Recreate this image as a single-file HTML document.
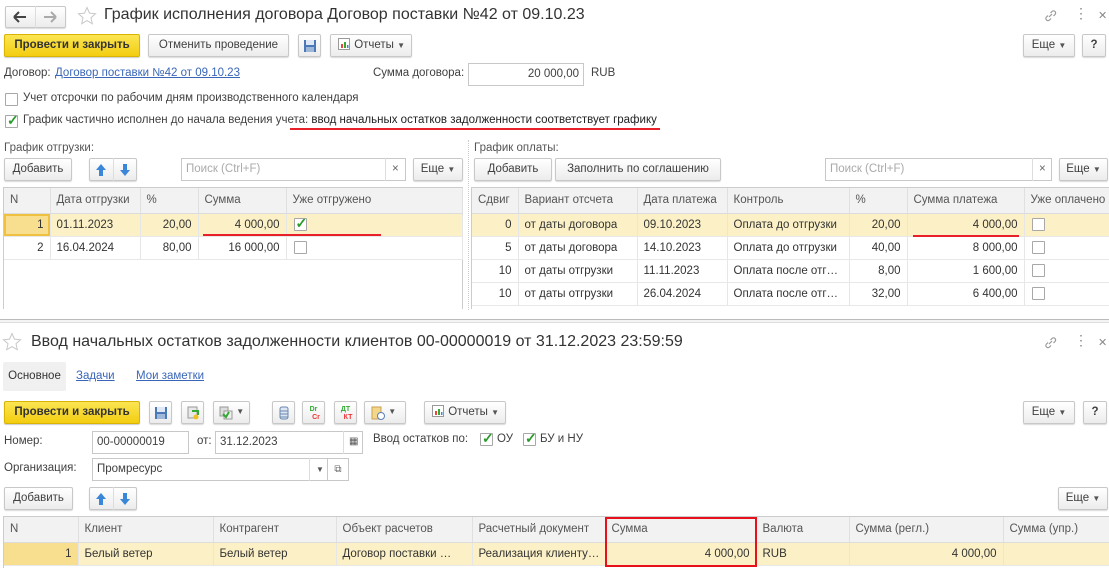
<!DOCTYPE html>
<html><head><meta charset="utf-8">
<style>
*{box-sizing:border-box;margin:0;padding:0}
body{width:1109px;height:568px;overflow:hidden;background:#fff;font-family:"Liberation Sans",Arial,sans-serif;font-size:11.5px;color:#404040;position:relative}
.a{position:absolute;white-space:nowrap}
.btn{position:absolute;border:1px solid #c8c8c8;border-radius:2px;background:linear-gradient(#fff,#ececec);box-shadow:0 1px 1px rgba(0,0,0,.15);text-align:center;color:#404040;line-height:20px;height:23px}
.yb{position:absolute;background:linear-gradient(#fbe552,#f3cd10);border:1px solid #d9b400;border-radius:2px;font-weight:bold;color:#333;text-align:center;line-height:21px;height:23px;box-shadow:0 1px 1px rgba(0,0,0,.2)}
.inp{position:absolute;border:1px solid #c8c8c8;background:#fff;height:23px;line-height:21px;padding:0 4px}
.cb{position:absolute;width:13px;height:13px;border:1px solid #a8a8a8;background:#fff;border-radius:1px}
.ck{position:absolute;left:1px;top:-4px;color:#2a9a2a;font-size:14px;font-weight:bold}
.lnk{color:#3a66b8;text-decoration:underline}
table{border-collapse:collapse;table-layout:fixed;position:absolute}
td{height:23px;padding:0 6px;border-right:1px solid #e6e6e6;border-bottom:1px solid #e8e8e8;white-space:nowrap;overflow:hidden;color:#333}
th{height:25px;padding:0 6px;background:#f2f2f2;font-weight:normal;text-align:left;border-right:1px solid #e0e0e0;border-bottom:1px solid #dcdcdc;color:#555;white-space:nowrap;overflow:hidden}
.r{text-align:right}
.sel td{background:#fcf1c6}
.sel td.n{background:#f8df90;box-shadow:inset 0 0 0 2px #f0c040}
.red{position:absolute;height:2px;background:#e8202a}
.dd{font-size:8px;color:#555}
.t{position:absolute;font-size:16px;color:#333;white-space:nowrap}
</style></head><body>

<svg width="0" height="0" style="position:absolute"><defs>
<g id="up"><path d="M6 1L1 7h3v6h4V7h3z" fill="#3a86d8"/></g>
<g id="dn"><path d="M6 13L1 7h3V1h4v6h3z" fill="#3a86d8"/></g>
<g id="sv"><rect x="1" y="1" width="12" height="12" fill="#4a78b8"/><rect x="3" y="1" width="8" height="5" fill="#dfe8f4"/><rect x="3" y="8" width="8" height="5" fill="#9fb8d8"/></g>
<g id="rep"><rect x="1.5" y="1.5" width="11" height="11" fill="#fff" stroke="#999"/><rect x="4" y="7" width="2" height="4" fill="#e44"/><rect x="7" y="5" width="2" height="6" fill="#3a3"/><rect x="10" y="8" width="1.5" height="3" fill="#48c"/></g>
<g id="star"><path d="M10 1.5l2.5 5.6 6 .6-4.5 4 1.3 6-5.3-3.1-5.3 3.1 1.3-6-4.5-4 6-.6z" fill="none" stroke="#c8c8c8"/></g>
<g id="link"><path d="M6 9l3-3M5 7.5L3.5 9a2 2 0 003 3L8 10.5M7.5 5L9 3.5a2 2 0 013 3L10.5 8" stroke="#999" stroke-width="1.2" fill="none"/></g>
</defs></svg>

<!-- top window header -->
<div class="btn" style="left:5px;top:6px;width:61px;height:22px"></div>
<div class="a" style="left:35px;top:6px;height:22px;border-left:1px solid #ddd"></div>
<svg class="a" style="left:13px;top:11px" width="14" height="12"><path d="M1 6h12M1 6l5-5M1 6l5 5" stroke="#444" stroke-width="2" fill="none"/></svg>
<svg class="a" style="left:43px;top:11px" width="14" height="12"><path d="M13 6H1M13 6L8 1M13 6l-5 5" stroke="#aaa" stroke-width="2" fill="none"/></svg>
<svg class="a" style="left:77px;top:6px" width="20" height="20"><use href="#star"/></svg>
<div class="t" style="left:104px;top:6px">График исполнения договора Договор поставки №42 от 09.10.23</div>
<svg class="a" style="left:1043px;top:8px" width="15" height="15"><use href="#link"/></svg>
<div class="a" style="left:1074px;top:5px;font-size:14px;color:#888">⋮</div>
<div class="a" style="left:1098px;top:9px;font-size:11px;color:#888">✕</div>

<div class="yb" style="left:4px;top:34px;width:136px">Провести и закрыть</div>
<div class="btn" style="left:148px;top:34px;width:141px">Отменить проведение</div>
<div class="btn" style="left:298px;top:34px;width:23px"><svg width="14" height="14" style="margin-top:4px"><use href="#sv"/></svg></div>
<div class="btn" style="left:330px;top:34px;width:82px;text-align:left;padding-left:6px"><svg width="14" height="14" style="vertical-align:-3px"><use href="#rep"/></svg> Отчеты <span class="dd">▼</span></div>
<div class="btn" style="left:1023px;top:34px;width:52px">Еще <span class="dd">▼</span></div>
<div class="btn" style="left:1082px;top:34px;width:24px;font-weight:bold">?</div>

<div class="a" style="left:4px;top:67px">Договор:</div>
<div class="a lnk" style="left:55px;top:67px">Договор поставки №42 от 09.10.23</div>
<div class="a" style="left:373px;top:67px">Сумма договора:</div>
<div class="inp" style="left:468px;top:63px;width:116px;text-align:right">20 000,00</div>
<div class="a" style="left:591px;top:67px">RUB</div>

<div class="cb" style="left:5px;top:93px"></div>
<div class="a" style="left:23px;top:92px">Учет отсрочки по рабочим дням производственного календаря</div>
<div class="cb" style="left:5px;top:115px"><span class="ck">✓</span></div>
<div class="a" style="left:23px;top:114px">График частично исполнен до начала ведения учета: <span style="color:#222">ввод начальных остатков задолженности соответствует графику</span></div>
<div class="red" style="left:290px;top:128px;width:370px"></div>

<div class="a" style="left:4px;top:142px;color:#555">График отгрузки:</div>
<div class="a" style="left:474px;top:142px;color:#555">График оплаты:</div>
<div class="a" style="left:468px;top:140px;height:170px;border-left:1px dotted #ccc"></div>

<div class="btn" style="left:4px;top:158px;width:68px">Добавить</div>
<div class="btn" style="left:89px;top:158px;width:48px"></div>
<div class="a" style="left:113px;top:158px;height:23px;border-left:1px solid #ddd"></div>
<svg class="a" style="left:95px;top:163px" width="12" height="14"><use href="#up"/></svg>
<svg class="a" style="left:119px;top:163px" width="12" height="14"><use href="#dn"/></svg>
<div class="inp" style="left:181px;top:158px;width:225px;color:#aaa">Поиск (Ctrl+F)</div>
<div class="a" style="left:385px;top:158px;height:23px;border-left:1px solid #ddd;padding-left:6px;line-height:22px;color:#666">×</div>
<div class="btn" style="left:413px;top:158px;width:50px">Еще <span class="dd">▼</span></div>

<div class="btn" style="left:474px;top:158px;width:78px">Добавить</div>
<div class="btn" style="left:555px;top:158px;width:166px">Заполнить по соглашению</div>
<div class="inp" style="left:825px;top:158px;width:227px;color:#aaa">Поиск (Ctrl+F)</div>
<div class="a" style="left:1032px;top:158px;height:23px;border-left:1px solid #ddd;padding-left:6px;line-height:22px;color:#666">×</div>
<div class="btn" style="left:1059px;top:158px;width:49px">Еще <span class="dd">▼</span></div>

<div class="a" style="left:3px;top:187px;width:460px;height:122px;border:1px solid #ccc;border-bottom:none"></div>
<table style="left:4px;top:188px;width:458px">
<colgroup><col style="width:46px"><col style="width:90px"><col style="width:58px"><col style="width:88px"><col style="width:176px"></colgroup>
<tr><th>N</th><th>Дата отгрузки</th><th>%</th><th>Сумма</th><th>Уже отгружено</th></tr>
<tr class="sel"><td class="n r">1</td><td>01.11.2023</td><td class="r">20,00</td><td class="r">4 000,00</td><td style="position:relative"><span class="cb" style="left:7px;top:4px"><span class="ck">✓</span></span></td></tr>
<tr><td class="r">2</td><td>16.04.2024</td><td class="r">80,00</td><td class="r">16 000,00</td><td style="position:relative"><span class="cb" style="left:7px;top:4px"></span></td></tr>
</table>
<div class="red" style="left:203px;top:234px;width:178px"></div>

<div class="a" style="left:471px;top:187px;width:640px;height:122px;border:1px solid #ccc;border-bottom:none"></div>
<table style="left:472px;top:188px;width:637px">
<colgroup><col style="width:46px"><col style="width:119px"><col style="width:90px"><col style="width:122px"><col style="width:58px"><col style="width:117px"><col style="width:85px"></colgroup>
<tr><th>Сдвиг</th><th>Вариант отсчета</th><th>Дата платежа</th><th>Контроль</th><th>%</th><th>Сумма платежа</th><th>Уже оплачено</th></tr>
<tr class="sel"><td class="r">0</td><td>от даты договора</td><td>09.10.2023</td><td>Оплата до отгрузки</td><td class="r">20,00</td><td class="r">4 000,00</td><td style="position:relative"><span class="cb" style="left:7px;top:4px"></span></td></tr>
<tr><td class="r">5</td><td>от даты договора</td><td>14.10.2023</td><td>Оплата до отгрузки</td><td class="r">40,00</td><td class="r">8 000,00</td><td style="position:relative"><span class="cb" style="left:7px;top:4px"></span></td></tr>
<tr><td class="r">10</td><td>от даты отгрузки</td><td>11.11.2023</td><td>Оплата после отг…</td><td class="r">8,00</td><td class="r">1 600,00</td><td style="position:relative"><span class="cb" style="left:7px;top:4px"></span></td></tr>
<tr><td class="r">10</td><td>от даты отгрузки</td><td>26.04.2024</td><td>Оплата после отг…</td><td class="r">32,00</td><td class="r">6 400,00</td><td style="position:relative"><span class="cb" style="left:7px;top:4px"></span></td></tr>
</table>
<div class="red" style="left:913px;top:235px;width:106px"></div>

<!-- separator -->
<div class="a" style="left:0;top:319px;width:1109px;height:4px;border-top:1px solid #bbb;border-bottom:1px solid #ddd;background:#f4f4f4"></div>

<!-- bottom window -->
<svg class="a" style="left:2px;top:332px" width="20" height="20"><use href="#star"/></svg>
<div class="t" style="left:31px;top:333px">Ввод начальных остатков задолженности клиентов 00-00000019 от 31.12.2023 23:59:59</div>
<svg class="a" style="left:1043px;top:335px" width="15" height="15"><use href="#link"/></svg>
<div class="a" style="left:1074px;top:332px;font-size:14px;color:#888">⋮</div>
<div class="a" style="left:1098px;top:336px;font-size:11px;color:#888">✕</div>

<div class="a" style="left:3px;top:362px;width:63px;height:29px;background:#f0f0f0;border-radius:2px;line-height:29px;text-align:center;color:#333">Основное</div>
<div class="a lnk" style="left:76px;top:370px">Задачи</div>
<div class="a lnk" style="left:136px;top:370px">Мои заметки</div>

<div class="yb" style="left:4px;top:401px;width:136px">Провести и закрыть</div>
<div class="btn" style="left:149px;top:401px;width:23px"><svg width="14" height="14" style="margin-top:4px"><use href="#sv"/></svg></div>
<div class="btn" style="left:181px;top:401px;width:23px"><svg width="14" height="14" style="margin-top:4px" viewBox="0 0 14 14"><rect x="2" y="1" width="9" height="11" fill="#e8e8e8" stroke="#999"/><path d="M6 5h6v4" stroke="#3a3" stroke-width="2" fill="none"/><circle cx="10" cy="11" r="2.5" fill="#f0c020"/></svg></div>
<div class="btn" style="left:213px;top:401px;width:37px;text-align:left;padding-left:5px"><svg width="14" height="14" style="margin-top:4px" viewBox="0 0 14 14"><rect x="1" y="1" width="8" height="9" fill="#ddd" stroke="#999"/><rect x="5" y="5" width="8" height="8" fill="#eee" stroke="#999"/><path d="M4 8l3 3 3-5" stroke="#3a3" stroke-width="2" fill="none"/></svg> <span class="dd" style="vertical-align:top">▼</span></div>
<div class="btn" style="left:272px;top:401px;width:23px"><svg width="12" height="14" style="margin-top:4px" viewBox="0 0 12 14"><rect x="2" y="1" width="8" height="12" rx="2" fill="#dde6f2" stroke="#6a88b0"/><path d="M2 5h8M2 8h8M2 11h8" stroke="#6a88b0"/></svg></div>
<div class="btn" style="left:302px;top:401px;width:23px;font-size:7px;line-height:8px;padding-top:4px;font-weight:bold"><span style="color:#3a3">Dr</span><br><span style="color:#e33;padding-left:5px">Cr</span></div>
<div class="btn" style="left:334px;top:401px;width:23px;font-size:7px;line-height:8px;padding-top:4px;font-weight:bold"><span style="color:#3a3">ДТ</span><br><span style="color:#e33;padding-left:5px">КТ</span></div>
<div class="btn" style="left:364px;top:401px;width:42px;text-align:left;padding-left:6px"><svg width="14" height="14" style="margin-top:4px" viewBox="0 0 14 14"><rect x="1" y="1" width="9" height="12" fill="#f2d68a" stroke="#c9a050"/><circle cx="10" cy="10" r="3.5" fill="#fff" stroke="#5a7fb8"/></svg> <span class="dd" style="vertical-align:top">▼</span></div>
<div class="btn" style="left:424px;top:401px;width:82px;text-align:left;padding-left:6px"><svg width="14" height="14" style="vertical-align:-3px"><use href="#rep"/></svg> Отчеты <span class="dd">▼</span></div>
<div class="btn" style="left:1023px;top:401px;width:52px">Еще <span class="dd">▼</span></div>
<div class="btn" style="left:1083px;top:401px;width:24px;font-weight:bold">?</div>

<div class="a" style="left:4px;top:435px">Номер:</div>
<div class="inp" style="left:92px;top:431px;width:97px">00-00000019</div>
<div class="a" style="left:197px;top:435px">от:</div>
<div class="inp" style="left:215px;top:431px;width:148px">31.12.2023</div>
<div class="a" style="left:343px;top:431px;height:23px;border-left:1px solid #ddd;padding-left:5px;line-height:22px;font-size:10px;color:#555">▦</div>
<div class="a" style="left:373px;top:433px">Ввод остатков по:</div>
<div class="cb" style="left:480px;top:433px"><span class="ck">✓</span></div>
<div class="a" style="left:497px;top:433px">ОУ</div>
<div class="cb" style="left:523px;top:433px"><span class="ck">✓</span></div>
<div class="a" style="left:540px;top:433px">БУ и НУ</div>

<div class="a" style="left:4px;top:462px">Организация:</div>
<div class="inp" style="left:92px;top:458px;width:236px">Промресурс</div>
<div class="a" style="left:309px;top:458px;height:23px;border-left:1px solid #ddd;padding-left:6px;line-height:22px" ><span class="dd">▼</span></div>
<div class="a" style="left:328px;top:458px;width:21px;height:23px;border:1px solid #c8c8c8;border-left:none;text-align:center;line-height:21px;font-size:10px;color:#666">⧉</div>

<div class="btn" style="left:4px;top:487px;width:69px">Добавить</div>
<div class="btn" style="left:89px;top:487px;width:48px"></div>
<div class="a" style="left:113px;top:487px;height:23px;border-left:1px solid #ddd"></div>
<svg class="a" style="left:95px;top:492px" width="12" height="14"><use href="#up"/></svg>
<svg class="a" style="left:119px;top:492px" width="12" height="14"><use href="#dn"/></svg>
<div class="btn" style="left:1058px;top:487px;width:50px">Еще <span class="dd">▼</span></div>

<div class="a" style="left:3px;top:516px;width:1108px;height:52px;border:1px solid #ccc;border-bottom:none"></div>
<table style="left:4px;top:517px;width:1105px">
<colgroup><col style="width:74px"><col style="width:135px"><col style="width:123px"><col style="width:136px"><col style="width:133px"><col style="width:151px"><col style="width:93px"><col style="width:154px"><col style="width:106px"></colgroup>
<tr><th>N</th><th>Клиент</th><th>Контрагент</th><th>Объект расчетов</th><th>Расчетный документ</th><th>Сумма</th><th>Валюта</th><th>Сумма (регл.)</th><th>Сумма (упр.)</th></tr>
<tr class="sel"><td class="n r" style="box-shadow:none">1</td><td>Белый ветер</td><td>Белый ветер</td><td>Договор поставки …</td><td>Реализация клиенту…</td><td class="r">4 000,00</td><td>RUB</td><td class="r">4 000,00</td><td></td></tr>
</table>
<div class="a" style="left:605px;top:517px;width:152px;height:50px;border:2px solid #e8101a"></div>

</body></html>
